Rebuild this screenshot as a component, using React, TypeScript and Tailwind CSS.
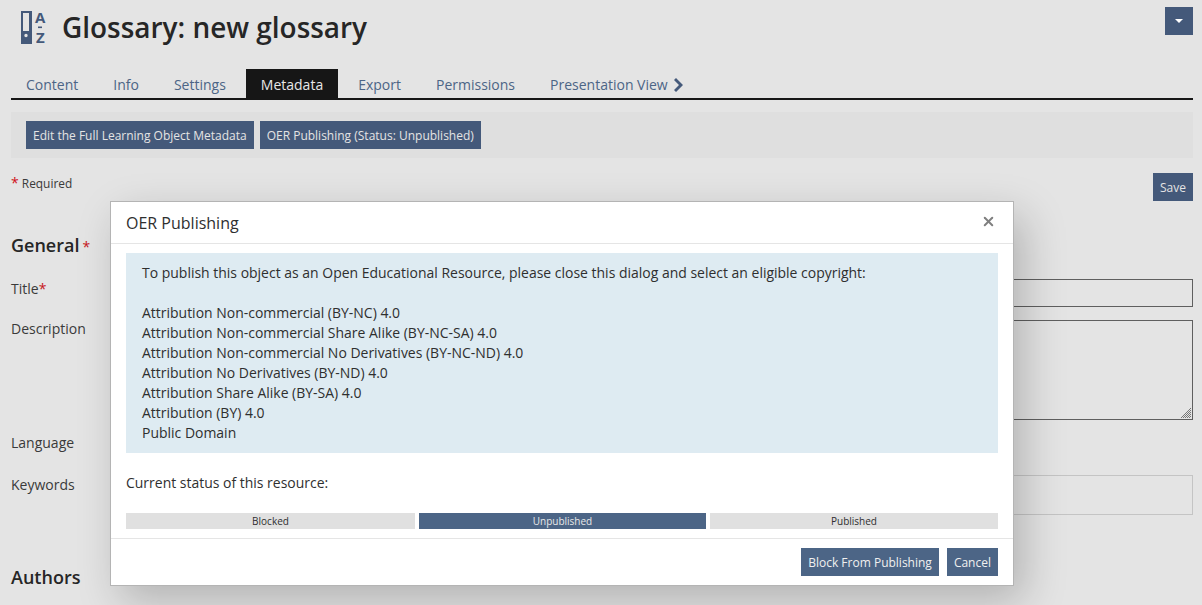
import { X } from "lucide-react";

const tabs = ["Content", "Info", "Settings", "Metadata", "Export", "Permissions"];

const copyrights = [
  "Attribution Non-commercial (BY-NC) 4.0",
  "Attribution Non-commercial Share Alike (BY-NC-SA) 4.0",
  "Attribution Non-commercial No Derivatives (BY-NC-ND) 4.0",
  "Attribution No Derivatives (BY-ND) 4.0",
  "Attribution Share Alike (BY-SA) 4.0",
  "Attribution (BY) 4.0",
  "Public Domain",
];

function GlossaryIcon() {
  return (
    <svg width="26" height="44" viewBox="0 0 26 44" className="shrink-0 mt-[5px]">
      <path
        fillRule="evenodd"
        fill="#44597a"
        d="M0 6h11v33H0zM2 8v18h6V8zM5 28.8a1.7 1.7 0 1 0 0 3.4 1.7 1.7 0 0 0 0-3.4z"
      />
      <text x="14" y="18" fontSize="15" fontWeight="700" fill="#44597a" fontFamily="'Open Sans', sans-serif">
        A
      </text>
      <rect x="17" y="21.5" width="4" height="1.6" fill="#44597a" />
      <text x="15" y="38" fontSize="15" fontWeight="700" fill="#44597a" fontFamily="'Open Sans', sans-serif">
        Z
      </text>
    </svg>
  );
}

function Header() {
  return (
    <div className="flex justify-between pr-[9px] h-[69px]">
      <div className="flex items-start pl-[21px] gap-[15px]">
        <GlossaryIcon />
        <h1 className="text-[27.95px] leading-[34px] font-semibold text-[#262626] mt-[10px]">Glossary: new glossary</h1>
      </div>
      <button className="mt-[7px] w-[28px] h-[28px] bg-[#44597a] flex items-center justify-center">
        <span className="border-x-[4px] border-t-[4px] border-x-transparent border-t-white" />
      </button>
    </div>
  );
}

function Tabs() {
  return (
    <div className="flex border-b-2 border-[#161616] h-[31px] mr-[9px] ml-[11px]">
      {tabs.map((t) =>
        t === "Metadata" ? (
          <div key={t} className="h-[29px] px-[15px] mr-[5px] bg-[#161616] text-[#e8e8e8] text-[14px] leading-[32px]">
            {t}
          </div>
        ) : (
          <div key={t} className="h-[29px] px-[15px] mr-[5px] text-[#4c6586] text-[14px] leading-[32px]">
            {t}
          </div>
        )
      )}
      <div className="h-[29px] px-[15px] text-[#4c6586] text-[14px] leading-[32px] flex">
        Presentation View
        <svg width="9" height="14" viewBox="0 0 9 14" className="ml-[6px] mt-[9px]">
          <path d="M2 0L9 7L2 14L0 12L5 7L0 2z" fill="#44597a" />
        </svg>
      </div>
    </div>
  );
}

function Field({
  label,
  required,
  className,
  labelClassName,
  children,
}: {
  label: string;
  required?: boolean;
  className: string;
  labelClassName?: string;
  children?: React.ReactNode;
}) {
  return (
    <div className={`flex ${className}`}>
      <div className={`w-[240px] shrink-0 text-[14px] leading-[20px] text-[#3a3a3a] ${labelClassName ?? ""}`}>
        {label}
        {required && <span className="text-[#c7161c]">*</span>}
      </div>
      <div className="flex-1">{children}</div>
    </div>
  );
}

function Background() {
  return (
    <div className="pl-[11px] pr-[9px]">
      <div className="flex justify-between h-[43px]">
        <p className="text-[11.9px] leading-[18px] text-[#3a3a3a] pt-[16px]">
          <span className="text-[#d0101a] text-[14px] leading-[14px]">*</span> Required
        </p>
        <button className="mt-[15px] h-[28px] px-[7px] pt-[2px] bg-[#44597a] text-[#e4e4e4] text-[12px]">Save</button>
      </div>
      <h2 className="mt-[32px] text-[18px] leading-[24px] font-semibold text-[#262626]">
        General<span className="ml-[3px] text-[#c7161c] text-[14px] font-normal">*</span>
      </h2>
      <Field label="Title" required className="mt-[20px] h-[41px]">
        <div className="h-[28px] border border-[#5f5f5f]" />
      </Field>
      <Field label="Description" className="h-[113px]" labelClassName="-mt-[1px]">
        <div className="relative h-[100px] border border-[#5f5f5f]">
          <svg width="12" height="12" viewBox="0 0 12 12" className="absolute right-0 bottom-0">
            <path d="M11 1L1 11M11 3L3 11M11 5L5 11M11 7L7 11M11 9L9 11" stroke="#777" strokeWidth="1" />
          </svg>
        </div>
      </Field>
      <Field label="Language" className="h-[42px]" />
      <Field label="Keywords" className="h-[91px]">
        <div className="h-[40px] border border-[#c4c4c4]" />
      </Field>
      <h2 className="text-[18px] leading-[24px] font-semibold text-[#262626] -mt-[1px]">Authors</h2>
    </div>
  );
}

function Modal() {
  return (
    <div className="absolute left-[110px] top-[201px] w-[904px] h-[385px] bg-white border border-[#b4b4b4] shadow-[10px_15px_40px_rgba(0,0,0,0.22)] flex flex-col">
      <div className="h-[42px] border-b border-[#e5e5e5] flex items-center justify-between pl-[15px] pr-[17px] shrink-0">
        <h3 className="text-[16px] text-[#2f2f2f]">OER Publishing</h3>
        <X size={15} strokeWidth={3.2} className="text-[#7f7f7f] -mt-[3px]" />
      </div>
      <div className="flex-1 px-[15px] pt-[9px]">
        <div className="bg-[#deebf2] h-[200px] px-[16px] py-[10px] text-[13.98px] leading-[20px] text-[#2f2f2f]">
          <p className="mb-[20px]">
            To publish this object as an Open Educational Resource, please close this dialog and select an eligible copyright:
          </p>
          {copyrights.map((c) => (
            <p key={c}>{c}</p>
          ))}
        </div>
        <p className="mt-[20px] text-[13.98px] leading-[20px] text-[#2f2f2f]">Current status of this resource:</p>
        <div className="flex gap-[4px] mt-[20px] text-[10px] leading-[16px] text-center text-[#2f2f2f]">
          <div className="w-[289px] h-[16px] bg-[#e0e0e0]">Blocked</div>
          <div className="w-[287px] h-[16px] bg-[#4c6586] text-[#e8e8e8]">Unpublished</div>
          <div className="flex-1 h-[16px] bg-[#e0e0e0]">Published</div>
        </div>
      </div>
      <div className="h-[47px] border-t border-[#e5e5e5] flex justify-end items-start gap-[8px] pt-[9px] pr-[15px] shrink-0">
        <button className="h-[28px] px-[7px] pt-[2px] bg-[#4c6586] text-[#f0f0f0] text-[12px]">Block From Publishing</button>
        <button className="h-[28px] px-[7px] pt-[2px] bg-[#4c6586] text-[#f0f0f0] text-[12px]">Cancel</button>
      </div>
    </div>
  );
}

export default function App() {
  return (
    <div className="relative h-[605px] overflow-hidden bg-[#e4e4e4] font-['Open_Sans',sans-serif]">
      <Header />
      <Tabs />
      <div className="mt-[12px] ml-[11px] mr-[9px] h-[46px] bg-[#dfdfdf] flex items-center gap-[6px] pl-[15px]">
        <button className="h-[28px] px-[7px] pt-[2px] bg-[#44597a] text-[#e4e4e4] text-[12px]">Edit the Full Learning Object Metadata</button>
        <button className="h-[28px] px-[7px] pt-[2px] bg-[#44597a] text-[#e4e4e4] text-[12px]">OER Publishing (Status: Unpublished)</button>
      </div>
      <Background />
      <Modal />
    </div>
  );
}
